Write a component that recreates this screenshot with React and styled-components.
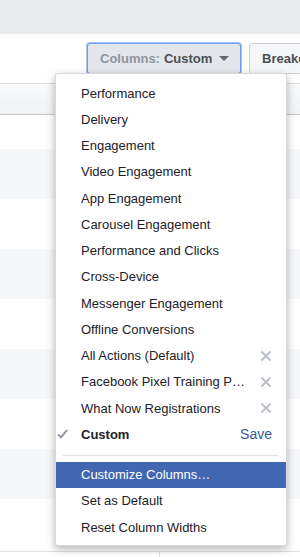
import styled, { createGlobalStyle } from "styled-components";

const GlobalStyle = createGlobalStyle`
  body {
    margin: 0;
    background: #fff;
    font-family: "Liberation Sans", Arial, sans-serif;
    overflow: hidden;
  }
`;

const presets = [
  { name: "Performance" },
  { name: "Delivery" },
  { name: "Engagement" },
  { name: "Video Engagement" },
  { name: "App Engagement" },
  { name: "Carousel Engagement" },
  { name: "Performance and Clicks" },
  { name: "Cross-Device" },
  { name: "Messenger Engagement" },
  { name: "Offline Conversions" },
  { name: "All Actions (Default)", removable: true },
  { name: "Facebook Pixel Training P…", removable: true },
  { name: "What Now Registrations", removable: true },
];

const actions = [
  { name: "Customize Columns…", active: true },
  { name: "Set as Default" },
  { name: "Reset Column Widths" },
];

function CheckIcon() {
  return (
    <svg width="11" height="10" viewBox="0 0 11 10">
      <path
        d="M1 5.4 L4 8.4 L10 1.2"
        fill="none"
        stroke="#8d949e"
        strokeWidth="1.9"
      />
    </svg>
  );
}

function RemoveIcon() {
  return (
    <svg width="12" height="12" viewBox="0 0 12 12">
      <path
        d="M1.5 1.5 L10.5 10.5 M10.5 1.5 L1.5 10.5"
        stroke="#bec2c9"
        strokeWidth="2.2"
      />
    </svg>
  );
}

export default function App() {
  return (
    <Page>
      <GlobalStyle />
      <TopBar />
      <Toolbar>
        <Anchor>
          <ToolbarButton $focused>
            <Muted>Columns:</Muted> Custom
            <Caret />
          </ToolbarButton>
          <Menu>
            {presets.map((item) => (
              <Item key={item.name}>
                <Lead />
                <Label>{item.name}</Label>
                {item.removable && <RemoveIcon />}
              </Item>
            ))}
            <Item $bold>
              <Lead>
                <CheckIcon />
              </Lead>
              <Label>Custom</Label>
              <SaveLink>Save</SaveLink>
            </Item>
            <Separator />
            {actions.map((item) => (
              <Item key={item.name} $active={item.active}>
                <Lead />
                <Label>{item.name}</Label>
              </Item>
            ))}
          </Menu>
        </Anchor>
        <ToolbarButton>Breakdown</ToolbarButton>
      </Toolbar>
      <Table>
        <HeaderRow />
        <Row $height={34} />
        {[0, 1, 2, 3, 4, 5, 6, 7].map((i) => (
          <Row key={i} $striped={i % 2 === 0} />
        ))}
        <FooterRow>
          <FooterCell />
        </FooterRow>
      </Table>
    </Page>
  );
}

const Page = styled.div`
  width: 300px;
  height: 557px;
  overflow: hidden;
  display: flex;
  flex-direction: column;
`;

const TopBar = styled.div`
  height: 34px;
  background: #e9ebee;
  flex-shrink: 0;
`;

const Toolbar = styled.div`
  height: 49px;
  flex-shrink: 0;
  box-sizing: border-box;
  padding: 9px 0 0 87px;
  display: flex;
  align-items: flex-start;
  gap: 8px;
`;

const Anchor = styled.div`
  position: relative;
  flex-shrink: 0;
`;

const ToolbarButton = styled.div`
  height: 31px;
  box-sizing: border-box;
  flex-shrink: 0;
  display: flex;
  align-items: center;
  gap: 4px;
  padding: 0 12px;
  font-size: 13px;
  font-weight: bold;
  color: #4b4f56;
  white-space: nowrap;
  border-radius: 3px;
  width: ${(p) => (p.$focused ? "154px" : "auto")};
  background: ${(p) => (p.$focused ? "#e4e6eb" : "#f5f6f7")};
  border: 1px solid ${(p) => (p.$focused ? "#6c9cf0" : "#ccd0d5")};
  box-shadow: ${(p) => (p.$focused ? "0 0 0 1px #a9c5f6" : "none")};
`;

const Muted = styled.span`
  color: #8d949e;
`;

const Caret = styled.span`
  width: 0;
  height: 0;
  margin-left: 3px;
  border-left: 5px solid transparent;
  border-right: 5px solid transparent;
  border-top: 5px solid #606770;
`;

const Menu = styled.div`
  position: absolute;
  top: 30px;
  left: -32px;
  width: 232px;
  box-sizing: border-box;
  padding: 6px 0 5px;
  background: #fff;
  border: 1px solid rgba(0, 0, 0, 0.15);
  border-radius: 3px;
  box-shadow: 0 3px 8px rgba(0, 0, 0, 0.3);
  z-index: 2;
`;

const Item = styled.div`
  height: 26.25px;
  display: grid;
  grid-template-columns: 25px 1fr auto;
  align-items: center;
  padding-right: 14px;
  font-size: 13px;
  font-weight: ${(p) => (p.$bold ? "bold" : "normal")};
  color: ${(p) => (p.$active ? "#fff" : "#1d2129")};
  background: ${(p) => (p.$active ? "#4267b2" : "transparent")};
`;

const Lead = styled.span`
  display: flex;
  align-items: center;
  padding-left: 1px;
`;

const Label = styled.span`
  white-space: nowrap;
  overflow: hidden;
  text-overflow: ellipsis;
`;

const SaveLink = styled.span`
  color: #365899;
  font-weight: normal;
  font-size: 14px;
`;

const Separator = styled.div`
  height: 1px;
  margin: 7px 7px 6px;
  background: #dddfe2;
`;

const Table = styled.div`
  display: flex;
  flex-direction: column;
`;

const HeaderRow = styled.div`
  height: 30px;
  flex-shrink: 0;
  border-top: 1px solid #dddfe2;
  border-bottom: 1px solid #c4c7cc;
  background: linear-gradient(#f9fafb, #f1f2f4);
`;

const Row = styled.div`
  height: ${(p) => p.$height || 50}px;
  flex-shrink: 0;
  background: ${(p) => (p.$striped ? "#f6f7f9" : "#fff")};
`;

const FooterRow = styled.div`
  height: 20px;
  flex-shrink: 0;
  margin-top: 2px;
  border-top: 1px solid #dddfe2;
`;

const FooterCell = styled.div`
  width: 159px;
  height: 100%;
  border-right: 1px solid #dddfe2;
`;
